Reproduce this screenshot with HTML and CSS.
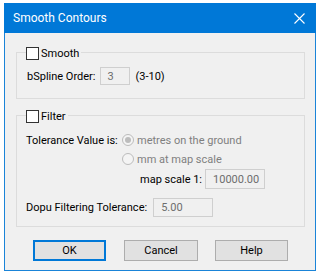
FILE: index.html
```html
<!DOCTYPE html>
<html lang="en">
<head>
    <meta charset="UTF-8">
    <title>Smooth Contours</title>
    <link rel="stylesheet" href="styles.css">
</head>
<body>

<div class="window">

    <div class="titlebar">
        <span class="title">Smooth Contours</span>
        <svg class="close" width="11" height="11" viewBox="0 0 11 11">
            <path d="M0.5 0.5 L10.5 10.5 M10.5 0.5 L0.5 10.5" stroke="#fff" stroke-width="1.1" fill="none"/>
        </svg>
    </div>

    <div class="client">

        <!-- Smooth -->
        <div class="group group-smooth">
            <div class="group-title"><span class="check"></span>Smooth</div>
            <div class="row row-order">
                <span class="label">bSpline Order:</span>
                <span class="field field-order">3</span>
                <span class="hint">(3-10)</span>
            </div>
        </div>

        <!-- Filter -->
        <div class="group group-filter">
            <div class="group-title"><span class="check"></span>Filter</div>
            <div class="row row-tol">
                <span class="label label-tol">Tolerance Value is:</span>
                <span class="radio checked"></span>
                <span class="disabled">metres on the ground</span>
            </div>
            <div class="row row-indent">
                <span class="radio"></span>
                <span class="disabled">mm at map scale</span>
            </div>
            <div class="row row-scale">
                <span class="label">map scale 1:</span>
                <span class="field field-scale">10000.00</span>
            </div>
            <div class="row row-dopu">
                <span class="label label-dopu">Dopu Filtering Tolerance:</span>
                <span class="field field-dopu">5.00</span>
            </div>
        </div>

        <div class="buttons">
            <button class="btn btn-default">OK</button>
            <button class="btn btn-cancel">Cancel</button>
            <button class="btn">Help</button>
        </div>

    </div>
</div>

</body>
</html>
```

FILE: styles.css
```css
body {
    margin: 0;
    background: #fff;
    font-family: Roboto, "Liberation Sans", sans-serif;
    font-size: 11px;
    color: #000;
}

.window {
    width: 310px;
    margin: 3px 0 0 4px;
    border: 1px solid #1a84d8;
    border-top: none;
    background: #f0f0f0;
}

.titlebar {
    height: 30px;
    margin: 0 -1px;
    background: #0078d7;
    color: #fff;
    display: flex;
    align-items: center;
    justify-content: space-between;
    padding: 0 11px 0 9px;
}

.title {
    font-size: 12px;
}

.client {
    padding: 19px 10px 9px 11px;
}

.group {
    border: 1px solid #dcdcdc;
    padding: 0 9px;
}

.group-title {
    display: flex;
    align-items: center;
    width: fit-content;
    height: 13px;
    margin-top: -6px;
    padding-right: 2px;
    background: #f0f0f0;
}

.check {
    width: 11px;
    height: 11px;
    border: 1px solid #333;
    background: #fff;
    margin-right: 2px;
}

.group-smooth {
    padding-bottom: 13px;
}

.group-filter {
    margin-top: 16px;
    padding-bottom: 9px;
}

.row {
    display: flex;
    align-items: center;
    height: 18px;
    white-space: nowrap;
}

.row-order {
    margin-top: 7px;
    padding-left: 1px;
}

.field {
    display: flex;
    align-items: center;
    box-sizing: border-box;
    border: 1px solid #cfcfcf;
    color: #6d6d6d;
    padding: 0 7px;
}

.field-order {
    width: 30px;
    height: 18px;
    margin-left: 4px;
}

.hint {
    margin-left: 6px;
}

.row-tol {
    margin-top: 8px;
}

.label-tol {
    width: 96px;
}

.radio {
    box-sizing: border-box;
    width: 12px;
    height: 12px;
    border-radius: 50%;
    border: 1px solid #bcbcbc;
    background: #f4f4f4;
    margin-right: 3px;
    position: relative;
}

.radio.checked::after {
    content: "";
    position: absolute;
    left: 2px;
    top: 2px;
    width: 6px;
    height: 6px;
    border-radius: 50%;
    background: #bcbcbc;
}

.disabled {
    color: #7f7f7f;
}

.row-indent {
    margin-top: 1px;
    padding-left: 96px;
}

.row-scale {
    height: 20px;
    margin-top: 1px;
    padding-left: 114px;
}

.field-scale {
    width: 60px;
    height: 20px;
    margin-left: 3px;
}

.row-dopu {
    height: 19px;
    margin-top: 9px;
}

.field-dopu {
    width: 60px;
    height: 19px;
    margin-left: 6px;
}

.buttons {
    display: flex;
    gap: 18px;
    margin-top: 13px;
    padding-left: 17px;
}

.btn {
    box-sizing: border-box;
    width: 73px;
    height: 21px;
    padding: 0;
    border: 1px solid #adadad;
    background: #e1e1e1;
    font-family: inherit;
    font-size: 11px;
    color: #000;
}

.btn-cancel {
    width: 74px;
    margin-right: -1px;
}

.btn-default {
    border: 2px solid #0078d7;
}
```
